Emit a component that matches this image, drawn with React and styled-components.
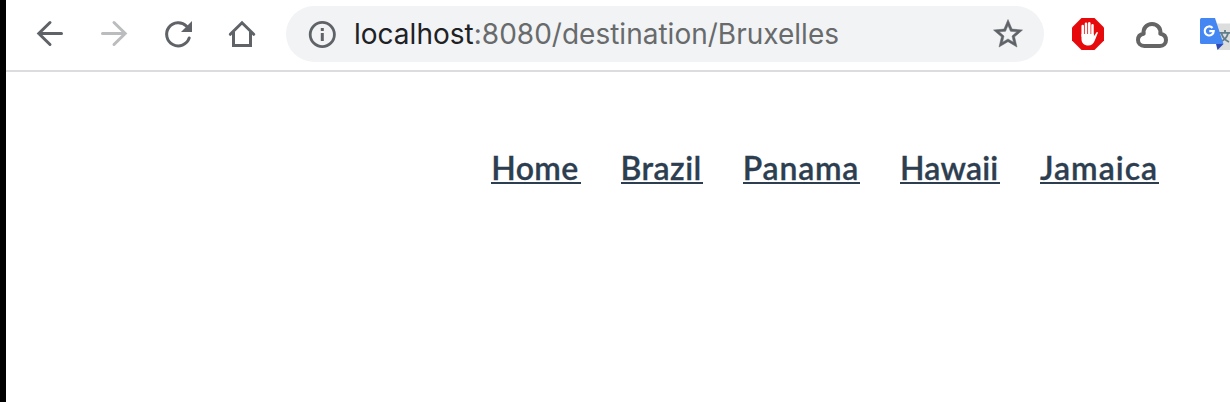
import React from 'react';
import styled, { createGlobalStyle } from 'styled-components';

const GlobalStyle = createGlobalStyle`
  * { box-sizing: border-box; }
  body { margin: 0; background: #fff; overflow: hidden; }
`;

const Window = styled.div`
  width: 1230px;
  height: 402px;
  border-left: 6px solid #000;
  background: #fff;
  overflow: hidden;
`;

const Toolbar = styled.header`
  display: flex;
  align-items: flex-start;
  height: 72px;
  padding: 6px 0 0 28px;
  border-bottom: 2px solid #dadce0;
`;

const NavButtons = styled.div`
  display: flex;
  gap: 32px;
  padding-top: 12px;
  margin-right: 28px;
  width: 224px;
`;

const Icon = styled.svg`
  display: block;
  flex: none;
  width: 32px;
  height: 32px;
  fill: none;
  stroke: ${(p) => p.$color || '#5f6368'};
  stroke-width: 3;
`;

const AddressBar = styled.div`
  display: flex;
  flex: none;
  align-items: center;
  width: 758px;
  height: 56px;
  padding: 0 20px;
  border-radius: 28px;
  background: #f1f3f4;
`;

const Url = styled.div`
  flex: 1;
  margin-left: 16px;
  font: 400 28px/56px Inter, sans-serif;
  letter-spacing: 0.01px;
  white-space: nowrap;
  color: #686a6c;
`;

const Host = styled.span`
  color: #202124;
`;

const Extensions = styled.div`
  display: flex;
  flex: none;
  gap: 32px;
  padding: 12px 0 0 28px;
`;

const Links = styled.nav`
  display: flex;
  justify-content: flex-end;
  gap: 40px;
  padding: 76px 70.8px 0 0;
`;

const NavLink = styled.a`
  width: ${(p) => p.$width}px;
  height: 36px;
  border-bottom: 2px solid #2c3e50;
  font: 600 32px/40px Lato, sans-serif;
  letter-spacing: ${(p) => p.$tracking}px;
  -webkit-text-stroke: 0.3px #2c3e50;
  white-space: nowrap;
  text-decoration: none;
  color: #2c3e50;
`;

const links = [
  { label: 'Home', width: 89.3, tracking: 0.4 },
  { label: 'Brazil', width: 82.3, tracking: 0.45 },
  { label: 'Panama', width: 117.2, tracking: 0.75 },
  { label: 'Hawaii', width: 100, tracking: 0.2 },
  { label: 'Jamaica', width: 119.2, tracking: 1 },
];

const BackIcon = () => (
  <Icon viewBox="0 0 32 32" strokeLinecap="round">
    <path d="M27.5 15.5H5M16 4.5L4.8 15.5L16 26.5" />
  </Icon>
);

const ForwardIcon = () => (
  <Icon viewBox="0 0 32 32" strokeLinecap="round" $color="#babcbe">
    <path d="M4.5 15.5H27M16 4.5L27.2 15.5L16 26.5" />
  </Icon>
);

const ReloadIcon = () => (
  <Icon viewBox="0 0 32 32" strokeLinecap="round">
    <path d="M27.2 20A11.6 11.6 0 1 1 24.6 8.2" />
    <path d="M30 3V14H19Z" fill="#5f6368" stroke="none" />
  </Icon>
);

const HomeIcon = () => (
  <Icon viewBox="0 0 32 32">
    <path d="M7.5 14V27.5H24.5V14" />
    <path d="M4.3 16.3L16 4.8L27.7 16.3" strokeLinecap="round" />
  </Icon>
);

const InfoIcon = () => (
  <Icon viewBox="0 0 32 32">
    <circle cx="16.3" cy="16.5" r="12.1" strokeWidth="2.8" />
    <path d="M16.3 10V13M16.3 15V23" />
  </Icon>
);

const StarIcon = () => (
  <Icon viewBox="0 0 32 32">
    <path
      transform="translate(-1.4 -1.4) scale(1.45)"
      fill="#5f6368"
      strokeWidth="0.35"
      d="M22 9.24l-7.19-.62L12 2 9.19 8.63 2 9.24l5.46 4.73L5.82 21 12 17.27 18.18 21l-1.63-7.03L22 9.24zM12 15.4l-3.76 2.27 1-4.28-3.32-2.88 4.38-.38L12 6.1l1.71 4.04 4.38.38-3.32 2.88 1 4.28L12 15.4z"
    />
  </Icon>
);

const BlockerIcon = () => (
  <Icon viewBox="0 0 32 32">
    <path d="M9.5 0H22.5L32 9.5V22.5L22.5 32H9.5L0 22.5V9.5Z" fill="#e60a0d" stroke="none" />
    <g stroke="#fff" strokeWidth="2.5" strokeLinecap="round">
      <path d="M10.7 8V18M14 5.8V17M17.3 5.3V17M20.5 7.3V18" />
      <path
        d="M9.5 16H21.7V18.5L24.4 14.4C25 13.5 26.1 13.9 25.8 15L22.7 22.8C21.4 26 19.6 27.5 16.4 27.5C12 27.5 9.5 25 9.5 21Z"
        fill="#fff"
        stroke="none"
      />
    </g>
  </Icon>
);

const CloudIcon = () => (
  <Icon viewBox="0 0 32 32" $color="#656565">
    <path
      strokeWidth="4"
      strokeLinejoin="round"
      d="M8.3 28H24C27.8 28 30 25.2 30 22C30 18.5 27.7 16.2 24.3 15.7C25.2 10.4 21.4 6 16 6C10.6 6 6.8 10.4 7.7 15.7C4.3 16.2 2 18.5 2 22C2 25.2 4.5 28 8.3 28Z"
    />
  </Icon>
);

const TranslateIcon = () => (
  <Icon viewBox="0 0 32 32">
    <path d="M14 5.5H32V32H18Z" fill="#dcdddd" stroke="none" />
    <path d="M19 14.8H30M25 12V15M21.5 15.5C22.5 19 25 22 29 24M28 15.5C27 19 24 22.5 20 24" stroke="#607d8b" strokeWidth="1.8" />
    <path d="M16 26H23.5L17.5 32Z" fill="#3049b4" stroke="none" />
    <path d="M1.5 0H15L23.5 26H1.5Q0 26 0 24.5V1.5Q0 0 1.5 0Z" fill="#4487f3" stroke="none" />
    <path d="M12.5 9.9A4.5 4.5 0 1 0 13.7 13.2H9.3" stroke="#fff" strokeWidth="2.2" />
  </Icon>
);

export default function App() {
  return (
    <Window>
      <GlobalStyle />
      <Toolbar>
        <NavButtons>
          <BackIcon />
          <ForwardIcon />
          <ReloadIcon />
          <HomeIcon />
        </NavButtons>
        <AddressBar>
          <InfoIcon />
          <Url>
            <Host>localhost</Host>:8080/destination/Bruxelles
          </Url>
          <StarIcon />
        </AddressBar>
        <Extensions>
          <BlockerIcon />
          <CloudIcon />
          <TranslateIcon />
        </Extensions>
      </Toolbar>
      <Links>
        {links.map((link) => (
          <NavLink key={link.label} href="#" $width={link.width} $tracking={link.tracking}>
            {link.label}
          </NavLink>
        ))}
      </Links>
    </Window>
  );
}
